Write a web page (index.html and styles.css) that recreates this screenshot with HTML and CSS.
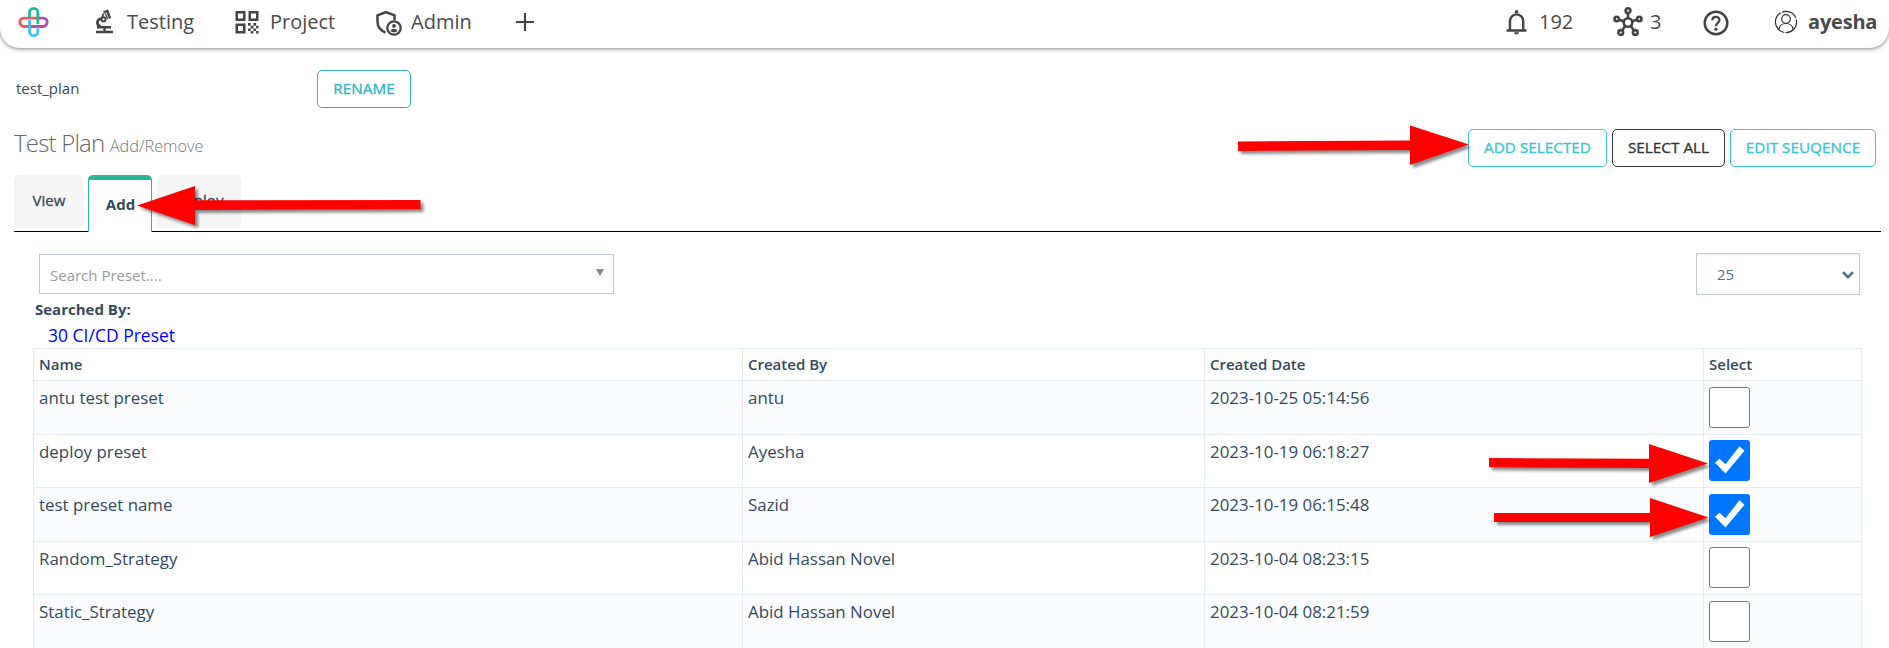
FILE: index.html
```html
<!DOCTYPE html>
<html lang="en">
<head>
<meta charset="utf-8">
<title>Test Plan</title>
<link rel="stylesheet" href="styles.css">
</head>
<body>
<header class="topbar">
  <svg class="logo" width="32" height="32" viewBox="0 0 32 32" fill="none" stroke-width="2.800">
    <path d="M12 20.500H7a4.200 4.200 0 0 1 0-8.400h13.500" stroke="#f0525f"/>
    <path d="M12.500 20.500h13.500a4.200 4.200 0 0 0 0-8.400h-5" stroke="#b84ba8"/>
    <path d="M12.500 14v11.500a4.200 4.200 0 0 0 8.400 0V21" stroke="#3cc5f2"/>
    <path d="M12.500 12V6.500a4.200 4.200 0 0 1 8.400 0V18" stroke="#1fb89a"/>
  </svg>
  <a class="nav testing"><svg width="20" height="26" viewBox="0 0 20 26"><g fill="none" stroke="#444"><path d="M1 24h17M9.500 24v-4.500M2 19.200h14" stroke-width="2.400"/><path d="M5.500 18.500C.500 16.500 2 11.500 6 10.500" stroke-width="2.600"/><path d="M8.500 4.500l3.800-1.600 2.800 7.400" stroke-width="2.400"/><path d="M8.500 5.500L7.300 9" stroke-width="1.800"/><path d="M10.300 5.500l2.500 5.500" stroke-width="1.400"/><circle cx="8.500" cy="11.300" r="2.100" stroke-width="2"/></g></svg><span>Testing</span></a>
  <a class="nav project"><svg width="24" height="24" viewBox="0 0 24 24"><g fill="none" stroke="#444" stroke-width="2.500"><path d="M1.750 2.250h7.500v7.500h-7.500zM14.750 2.250h7.500v7.500h-7.500zM1.750 14.750h7.500v7.500h-7.500z"/></g><path fill="#444" d="M13 13h2.700v2.700H13zM18.400 13h2.700v2.700h-2.700zM15.700 15.700h2.700v2.700h-2.700zM21.100 15.700h2.400v2.700h-2.400zM13 18.400h2.700v2.700H13zM18.400 18.400h2.700v2.700h-2.700zM15.700 21.100h2.700v2.400h-2.700zM21.100 21.100h2.400v2.400h-2.400z"/></svg><span>Project</span></a>
  <a class="nav admin"><svg width="26" height="26" viewBox="0 0 26 26"><g fill="none" stroke="#444" stroke-width="2.500"><path d="M9.500 22.500C4.500 20.500 1.500 16.500 1.500 11.500V5.300L10 2l8.500 3.300V10"/><circle cx="18" cy="18" r="6.700" stroke-width="2.300"/></g><circle cx="18" cy="15.900" r="1.900" fill="#444"/><path d="M14.500 20.800c1-2.400 6-2.400 7 0-1.800 2-5.200 2-7 0z" fill="#444"/></svg><span>Admin</span></a>
  <svg class="plus" width="18" height="18" viewBox="0 0 18 18"><path d="M9 0v18M0 9h18" stroke="#444" stroke-width="2.200"/></svg>
  <div class="spacer"></div>
  <a class="nav bell"><svg width="22" height="26" viewBox="0 0 22 26"><path d="M.500 21.500h20M4 21.500V12a6.600 6.600 0 0 1 13.200 0v9.500" fill="none" stroke="#444" stroke-width="2.400"/><path d="M8.800 4V2.800a1.800 1.800 0 0 1 3.600 0V4zM8 23.200h5a2.500 2.200 0 0 1-5 0z" fill="#444"/></svg><span>192</span></a>
  <a class="nav hub"><svg width="30" height="30" viewBox="0 0 30 30"><g fill="none" stroke="#444" stroke-width="2.600"><circle cx="15" cy="15.500" r="4.300"/><circle cx="15" cy="3.700" r="2.400"/><circle cx="3.700" cy="12" r="2.200"/><circle cx="26.300" cy="12" r="2.200"/><circle cx="7.700" cy="25.500" r="2.400"/><circle cx="22.300" cy="25.500" r="2.400"/><path d="M15 6v5M6 12.800l5 1.500M24 12.800l-5 1.500M9.200 23.300l3.200-4.500M20.800 23.300l-3.200-4.500"/></g></svg><span>3</span></a>
  <svg class="help" width="26" height="26" viewBox="0 0 26 26"><circle cx="13" cy="13" r="11.300" fill="none" stroke="#444" stroke-width="2.500"/><path d="M9.300 10.200C9.500 5.800 16.500 5.900 16.500 10c0 2.700-3.600 3-3.600 6.200" fill="none" stroke="#444" stroke-width="2.300"/><circle cx="12.900" cy="19.200" r="1.600" fill="#444"/></svg>
  <a class="nav user"><svg width="24" height="24" viewBox="0 0 24 24" fill="none" stroke="#333" stroke-width="1.200"><circle cx="12" cy="12" r="10.600" stroke-dasharray="17 1.200 26 1"/><circle cx="12" cy="9" r="4.300"/><path d="M5 19.500c.500-8 13.500-8 14 0"/></svg><span>ayesha</span></a>
</header>
<main>
  <div class="rename-row"><span class="plan">test_plan</span><button class="btn teal dark">RENAME</button></div>
  <div class="title-row">
    <h1>Test Plan <small>Add/Remove</small></h1>
    <div class="actions"><button class="btn teal add-sel">ADD SELECTED</button><button class="btn black sel-all">SELECT ALL</button><button class="btn teal edit-seq">EDIT SEUQENCE</button></div>
  </div>
  <nav class="tabs"><a class="tab view">View</a><a class="tab active">Add</a><a class="tab deploy">Deploy</a></nav>
  <div class="filters">
    <div class="search"><span>Search Preset....</span><svg width="8" height="7" viewBox="0 0 8 7"><path d="M0 0h8L4 7z" fill="#888"/></svg></div>
    <div class="count"><span>25</span><svg width="12" height="8" viewBox="0 0 12 8"><path d="M1 1.200l5 5 5-5" fill="none" stroke="#4a6787" stroke-width="2.400"/></svg></div>
  </div>
  <div class="by">Searched By:</div>
  <div class="result">30 CI/CD Preset</div>
  <table class="presets">
    <colgroup><col class="c1"><col class="c2"><col class="c3"><col class="c4"></colgroup>
    <thead><tr><th>Name</th><th>Created By</th><th>Created Date</th><th>Select</th></tr></thead>
    <tbody>
      <tr><td>antu test preset</td><td>antu</td><td>2023-10-25 05:14:56</td><td><span class="box"></span></td></tr>
      <tr><td>deploy preset</td><td>Ayesha</td><td>2023-10-19 06:18:27</td><td><span class="box on"><svg width="41" height="41" viewBox="0 0 41 41"><path d="M6 22.700l4.500-4 6 5.500L30.500 6.300l5 4.400-19 22.800z" fill="#fff"/></svg></span></td></tr>
      <tr><td>test preset name</td><td>Sazid</td><td>2023-10-19 06:15:48</td><td><span class="box on"><svg width="41" height="41" viewBox="0 0 41 41"><path d="M6 22.700l4.500-4 6 5.500L30.500 6.300l5 4.400-19 22.800z" fill="#fff"/></svg></span></td></tr>
      <tr><td>Random_Strategy</td><td>Abid Hassan Novel</td><td>2023-10-04 08:23:15</td><td><span class="box"></span></td></tr>
      <tr><td>Static_Strategy</td><td>Abid Hassan Novel</td><td>2023-10-04 08:21:59</td><td><span class="box"></span></td></tr>
    </tbody>
  </table>
</main>
<svg class="arrows" width="1889" height="648" viewBox="0 0 1889 648" fill="#f00">
  <path d="M1238 141.500L1410 140.500V125.500L1469 144.500 1410 165V150L1238 151z"/>
  <path d="M137 205.500L195 186V200.300L420.500 200V209.300L195 210V225z"/>
  <path d="M1489 458L1649 458.800V444L1708 463.500 1649 483V468L1489 467.300z"/>
  <path d="M1494 513H1650V498L1708.500 517.500 1650 537V522H1494z"/>
</svg>
</body>
</html>
```
FILE: styles.css
```css
* { box-sizing: border-box; }
body { margin: 0; width: 1889px; height: 648px; overflow: hidden; background: #fff; color: #34495e; font-family: "Open Sans", "Noto Sans", sans-serif; }
svg { display: block; flex: none; }
.topbar { display: flex; align-items: flex-start; height: 48px; padding: 0 13px 0 17px; border-radius: 0 0 20px 20px; background: #fff; box-shadow: 0 1px 4px rgba(0,0,0,.5); color: #4a4a4a; font-size: 20px; line-height: 44px; }
.logo { margin-top: 6px; }
.nav { display: flex; align-items: flex-start; white-space: nowrap; }
.nav span { flex: none; }
.testing { width: 140px; margin-left: 46px; gap: 12px; }
.testing svg { margin-top: 8px; }
.project { width: 141px; gap: 11px; }
.project svg { margin-top: 10px; }
.admin { width: 140px; gap: 9px; }
.admin svg { margin-top: 10px; }
.plus { margin-top: 13px; }
.spacer { flex: 1; }
.bell { width: 107px; gap: 11px; }
.bell svg { margin-top: 9px; }
.hub { width: 90px; gap: 7px; }
.hub svg { margin-top: 7px; }
.help { margin: 10px 45px 0 0; }
.user { width: 102px; gap: 10px; font-weight: 700; letter-spacing: -.2px; }
.user svg { margin-top: 10px; }
.rename-row { display: flex; align-items: center; padding: 22px 0 0 16px; }
.plan { width: 301px; padding-bottom: 2px; font-size: 15px; }
.btn { height: 38px; padding: 0 0 2px; background: #fff; border: 1px solid; border-radius: 5px; font: 500 15.300px "Open Sans", sans-serif; -webkit-text-stroke: .35px currentColor; white-space: nowrap; }
.teal { color: #36c6d3; }
.dark { width: 94px; color: #2fb5c2; }
.black { color: #2f353b; }
.title-row { display: flex; justify-content: space-between; height: 67px; padding: 0 13px 0 14px; }
h1 { margin: 18px 0 0; color: #666; font-size: 24px; line-height: 34px; font-weight: 300; letter-spacing: -.8px; }
h1 small { color: #777; font-size: 16.300px; letter-spacing: 0; }
.actions { display: flex; gap: 5px; padding-top: 21px; }
.add-sel { width: 139px; }
.sel-all { width: 113px; }
.edit-seq { width: 146px; }
.tabs { display: flex; gap: 5px; height: 57px; margin: 0 8px 0 14px; border-bottom: 1px solid #000; font-size: 15px; font-weight: 500; }
.tab { height: 52px; background: #f5f5f5; border-radius: 5px 5px 0 0; text-align: center; line-height: 50px; -webkit-text-stroke: .3px currentColor; }
.view { width: 69px; padding-left: 1px; }
.active { width: 64px; height: 57px; padding-left: 1px; background: #fff; border: 1px solid #29b598; border-top-width: 5px; border-bottom: 0; font-weight: 700; line-height: 48px; -webkit-text-stroke: 0; }
.deploy { width: 84px; }
.filters { display: flex; justify-content: space-between; align-items: flex-start; padding: 21px 29px 0 39px; }
.search, .count { display: flex; justify-content: space-between; border: 1px solid #c2cad8; }
.search { width: 575px; height: 40px; margin-top: 1px; padding: 0 9px 0 10px; color: #999; font-size: 15px; line-height: 40px; }
.search svg { margin-top: 14px; }
.count { width: 164px; height: 42px; padding: 0 5px 0 20px; color: #557086; font-size: 15px; line-height: 40px; box-shadow: inset 0 1px 1px rgba(0,0,0,.08); }
.count svg { margin-top: 17px; }
.by { height: 27px; padding-left: 35px; font-size: 15px; line-height: 28px; font-weight: 700; }
.result { height: 26px; padding-left: 48px; color: #00f; font-size: 17.500px; line-height: 26px; }
.presets { width: 1829px; margin-left: 33px; border-collapse: collapse; table-layout: fixed; font-size: 16.900px; }
.c1 { width: 709px; }
.c2 { width: 462px; }
.c3 { width: 499px; }
.presets th, .presets td { padding: 0 5px; border: 1px solid #e7ecf1; text-align: left; vertical-align: top; white-space: nowrap; }
.presets th { height: 32px; font-size: 15px; line-height: 31px; font-weight: 600; }
.presets td { height: 53.500px; line-height: 34px; }
tbody tr:nth-child(odd) { background: #fbfcfd; }
.box { display: block; width: 41px; height: 41px; margin-top: 5.500px; border: 1px solid #767676; border-radius: 3px; background: #fff; }
.box.on { border: 0; background: #0075ff; }
.arrows { position: absolute; left: 0; top: 0; filter: drop-shadow(3px 3px 1.500px rgba(0,0,0,.45)); }
```
